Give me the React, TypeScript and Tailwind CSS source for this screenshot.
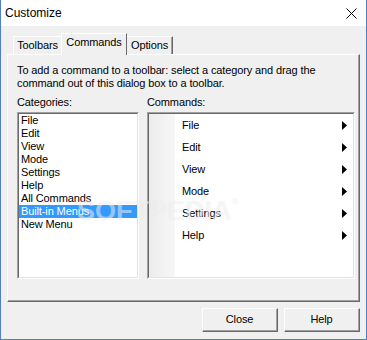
import React from "react";

const font = { fontFamily: '"Liberation Sans", Arial, sans-serif' };

function Arrow() {
  return (
    <svg width="5" height="9" viewBox="0 0 5 9" className="block">
      <polygon points="0,0 5,4.5 0,9" fill="#000" />
    </svg>
  );
}

const categories = [
  "File",
  "Edit",
  "View",
  "Mode",
  "Settings",
  "Help",
  "All Commands",
  "Built-in Menus",
  "New Menu",
];

const commands = ["File", "Edit", "View", "Mode", "Settings", "Help"];

function Btn({ label }: { label: string }) {
  return (
    <div className="w-[76px] h-[24px] bg-[#f0f0f0] border-t border-l border-white border-b border-r border-b-[#696969] border-r-[#696969]">
      <div className="w-full h-full flex items-center justify-center border-b border-r border-b-[#a0a0a0] border-r-[#a0a0a0] text-[11px] text-black">
        {label}
      </div>
    </div>
  );
}

export default function App() {
  return (
    <div
      style={font}
      className="relative w-[367px] h-[340px] bg-[#f0f0f0] border-l border-r border-b border-[#4f7ecb] flex flex-col overflow-hidden tracking-[-0.12px]"
    >
      {/* title bar */}
      <div className="h-[26px] bg-white flex items-center justify-between pl-[4px] pr-[9px] shrink-0 tracking-normal">
        <span className="text-[12px] text-black leading-none">Customize</span>
        <svg width="11" height="11" viewBox="0 0 11 11">
          <path d="M0.5 0.5 L10.5 10.5 M10.5 0.5 L0.5 10.5" stroke="#000" strokeWidth="1" />
        </svg>
      </div>

      {/* tabs */}
      <div className="mt-[7px] h-[21px] flex items-end pl-[12px] text-[11px] leading-[13px] text-black">
        <div className="h-[18px] w-[48px] border-t border-l border-white flex items-center justify-center pb-[1px] relative z-0">
          Toolbars
        </div>
        <div className="h-[22px] w-[66px] -mb-[1px] bg-[#f0f0f0] border-t border-l border-r border-white border-r-[#696969] flex items-start justify-center pt-[2px] relative z-10">
          Commands
        </div>
        <div className="h-[18px] w-[46px] border-t border-r border-white border-r-[#696969] flex items-center justify-center pb-[1px] shadow-[inset_-1px_0_0_#a0a0a0]">
          Options
        </div>
      </div>

      {/* panel */}
      <div className="mx-[6px] h-[248px] border-t border-l border-white border-r border-b border-r-[#696969] border-b-[#696969] shrink-0">
        <div className="h-full border-r border-b border-r-[#a0a0a0] border-b-[#a0a0a0] pt-[9px] pl-[9px] pr-[3px] flex flex-col">
          <p className="text-[11px] leading-[13px] text-black">
            To add a command to a toolbar: select a category and drag the
            <br />
            command out of this dialog box to a toolbar.
          </p>
          <div className="mt-[6px] flex gap-[8px]">
            <div className="flex flex-col w-[122px]">
              <div className="text-[11px] leading-[13px] text-black">Categories:</div>
              <div className="mt-[3px] h-[167px] bg-white border-t border-l border-[#a0a0a0] border-b border-r border-b-white border-r-white">
                <div className="h-full border-t border-l border-[#696969] border-b border-r border-b-[#e3e3e3] border-r-[#e3e3e3]">
                  {categories.map((c) => (
                    <div
                      key={c}
                      className={
                        "h-[13px] pl-[2px] text-[11px] leading-[13px] " +
                        (c === "Built-in Menus" ? "bg-[#3399ff] text-white" : "text-black")
                      }
                    >
                      {c}
                    </div>
                  ))}
                </div>
              </div>
            </div>
            <div className="flex flex-col flex-1">
              <div className="text-[11px] leading-[13px] text-black">Commands:</div>
              <div className="mt-[3px] h-[167px] bg-white border-t border-l border-[#a0a0a0] border-b border-r border-b-white border-r-white">
                <div className="h-full border-t border-l border-[#696969] border-b border-r border-b-[#e3e3e3] border-r-[#e3e3e3] flex">
                  <div className="w-[26px] h-full bg-[linear-gradient(to_right,#ececec,#f7f7f7)]" />
                  <div className="flex-1 flex flex-col">
                    {commands.map((c) => (
                      <div key={c} className="h-[22px] flex items-center justify-between pl-[7px] pr-[6px] text-[11px] text-black">
                        <span>{c}</span>
                        <Arrow />
                      </div>
                    ))}
                  </div>
                </div>
              </div>
            </div>
          </div>
        </div>
      </div>

      {/* buttons */}
      <div className="mt-[6px] mr-[6px] flex justify-end gap-[6px]">
        <Btn label="Close" />
        <Btn label="Help" />
      </div>

      {/* watermark */}
      <div className="absolute left-[76px] top-[198px] text-[27px] font-bold tracking-[0px] text-white/50 [text-shadow:0_0_1px_rgba(0,0,0,0.08)] pointer-events-none select-none leading-none">
        SOFTPEDIA<span className="text-[9px] align-top">®</span>
      </div>
    </div>
  );
}
